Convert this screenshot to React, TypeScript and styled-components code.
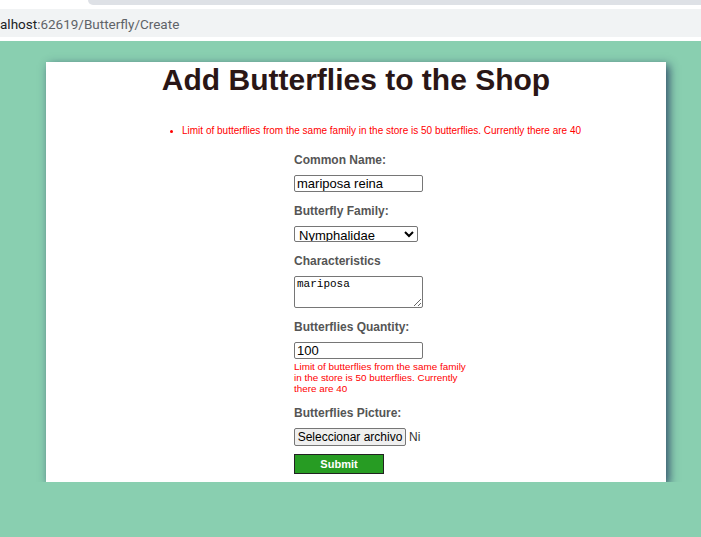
import styled, { createGlobalStyle } from "styled-components"

const GlobalStyle = createGlobalStyle`
  html, body {
    margin: 0;
    padding: 0;
    background: #89cfb0;
    font-family: "Liberation Sans", Arial, sans-serif;
  }
`

const Chrome = styled.div`
  background: #fff;
  height: 41px;
  overflow: hidden;
`

const TabEdge = styled.div`
  margin-left: 88px;
  height: 5px;
  background: #dee1e6;
  border-bottom-left-radius: 8px;
`

const AddressBar = styled.div`
  margin-top: 4px;
  height: 28px;
  padding-top: 1px;
  box-sizing: border-box;
  background: #f1f3f4;
  display: flex;
  align-items: center;
  font-family: Roboto, "Open Sans", sans-serif;
  font-size: 13.5px;
  color: #5f6368;
  white-space: nowrap;

  b {
    font-weight: 400;
    color: #202124;
  }
`

const Card = styled.div`
  width: 620px;
  margin: 21px 0 0 46px;
  padding: 0 0 8px;
  background: #fff;
  box-shadow: 3px 3px 9px rgba(35, 55, 95, 0.85);
`

const Title = styled.h1`
  margin: 0;
  padding-top: 1px;
  text-align: center;
  font-size: 30px;
  line-height: 34px;
  font-weight: 700;
  color: #2a1616;
`

const ErrorList = styled.ul`
  margin: 28px 0 16px;
  padding-left: 136px;
  color: #f00;
  font-size: 10px;
  line-height: 12px;

  li::marker {
    font-size: 9px;
  }
`

const Form = styled.form`
  margin-left: 248px;
  display: flex;
  flex-direction: column;
`

const Field = styled.div`
  display: flex;
  flex-direction: column;
  align-items: flex-start;
  margin-bottom: 12px;
`

const Label = styled.label`
  font-size: 12px;
  line-height: 14px;
  font-weight: 700;
  color: #555;
  margin-bottom: 8px;
`

const TextInput = styled.input`
  box-sizing: border-box;
  width: 129px;
  height: 17px;
  padding: 0 2px;
  border: 1px solid #767676;
  border-radius: 2px;
  font-family: "Liberation Sans", Arial, sans-serif;
  font-size: 13px;
  color: #000;
`

const Select = styled.select`
  box-sizing: border-box;
  width: 124px;
  height: 16px;
  padding: 0;
  border: 1px solid #767676;
  border-radius: 2px;
  font-family: "Liberation Sans", Arial, sans-serif;
  font-size: 13px;
  color: #000;
  background: #fff;
`

const TextArea = styled.textarea`
  box-sizing: border-box;
  width: 129px;
  height: 32px;
  padding: 1px 2px;
  border: 1px solid #767676;
  border-radius: 2px;
  font-family: "Liberation Mono", monospace;
  font-size: 11px;
  color: #000;
`

const FieldError = styled.span`
  margin-top: 2px;
  width: 178px;
  font-size: 9.9px;
  line-height: 11px;
  color: #f00;
`

const FileRow = styled.div`
  width: 129px;
  height: 18px;
  display: flex;
  align-items: center;
  white-space: nowrap;
  font-size: 12px;
  color: #333;
`

const FileButton = styled.button`
  flex: none;
  box-sizing: border-box;
  height: 18px;
  width: 112px;
  margin-right: 3px;
  padding: 0 2px;
  border: 1px solid #767676;
  border-radius: 2px;
  background: #efefef;
  font-family: "Liberation Sans", Arial, sans-serif;
  font-size: 12px;
  color: #000;
`

const Submit = styled.button`
  box-sizing: border-box;
  width: 90px;
  height: 20px;
  margin-top: -4px;
  border: 1px solid #222;
  background: #279c23;
  color: #fff;
  font-family: "Liberation Sans", Arial, sans-serif;
  font-size: 11px;
  font-weight: 700;
  padding: 0;
`

const limitMsg =
  "Limit of butterflies from the same family in the store is 50 butterflies. Currently there are 40"

export default function App() {
  return (
    <>
      <GlobalStyle />
      <Chrome>
        <TabEdge />
        <AddressBar>
          <b>alhost</b>:62619/Butterfly/Create
        </AddressBar>
      </Chrome>
      <Card>
        <Title>Add Butterflies to the Shop</Title>
        <ErrorList>
          <li>{limitMsg}</li>
        </ErrorList>
        <Form onSubmit={(e) => e.preventDefault()}>
          <Field>
            <Label>Common Name:</Label>
            <TextInput defaultValue="mariposa reina" />
          </Field>
          <Field>
            <Label>Butterfly Family:</Label>
            <Select defaultValue="Nymphalidae">
              <option>Nymphalidae</option>
              <option>Papilionidae</option>
              <option>Pieridae</option>
            </Select>
          </Field>
          <Field>
            <Label>Characteristics</Label>
            <TextArea defaultValue="mariposa" />
          </Field>
          <Field>
            <Label>Butterflies Quantity:</Label>
            <TextInput defaultValue="100" />
            <FieldError>{limitMsg}</FieldError>
          </Field>
          <Field>
            <Label>Butterflies Picture:</Label>
            <FileRow>
              <FileButton type="button">Seleccionar archivo</FileButton>
              Ni
            </FileRow>
          </Field>
          <Submit type="submit">Submit</Submit>
        </Form>
      </Card>
    </>
  )
}
